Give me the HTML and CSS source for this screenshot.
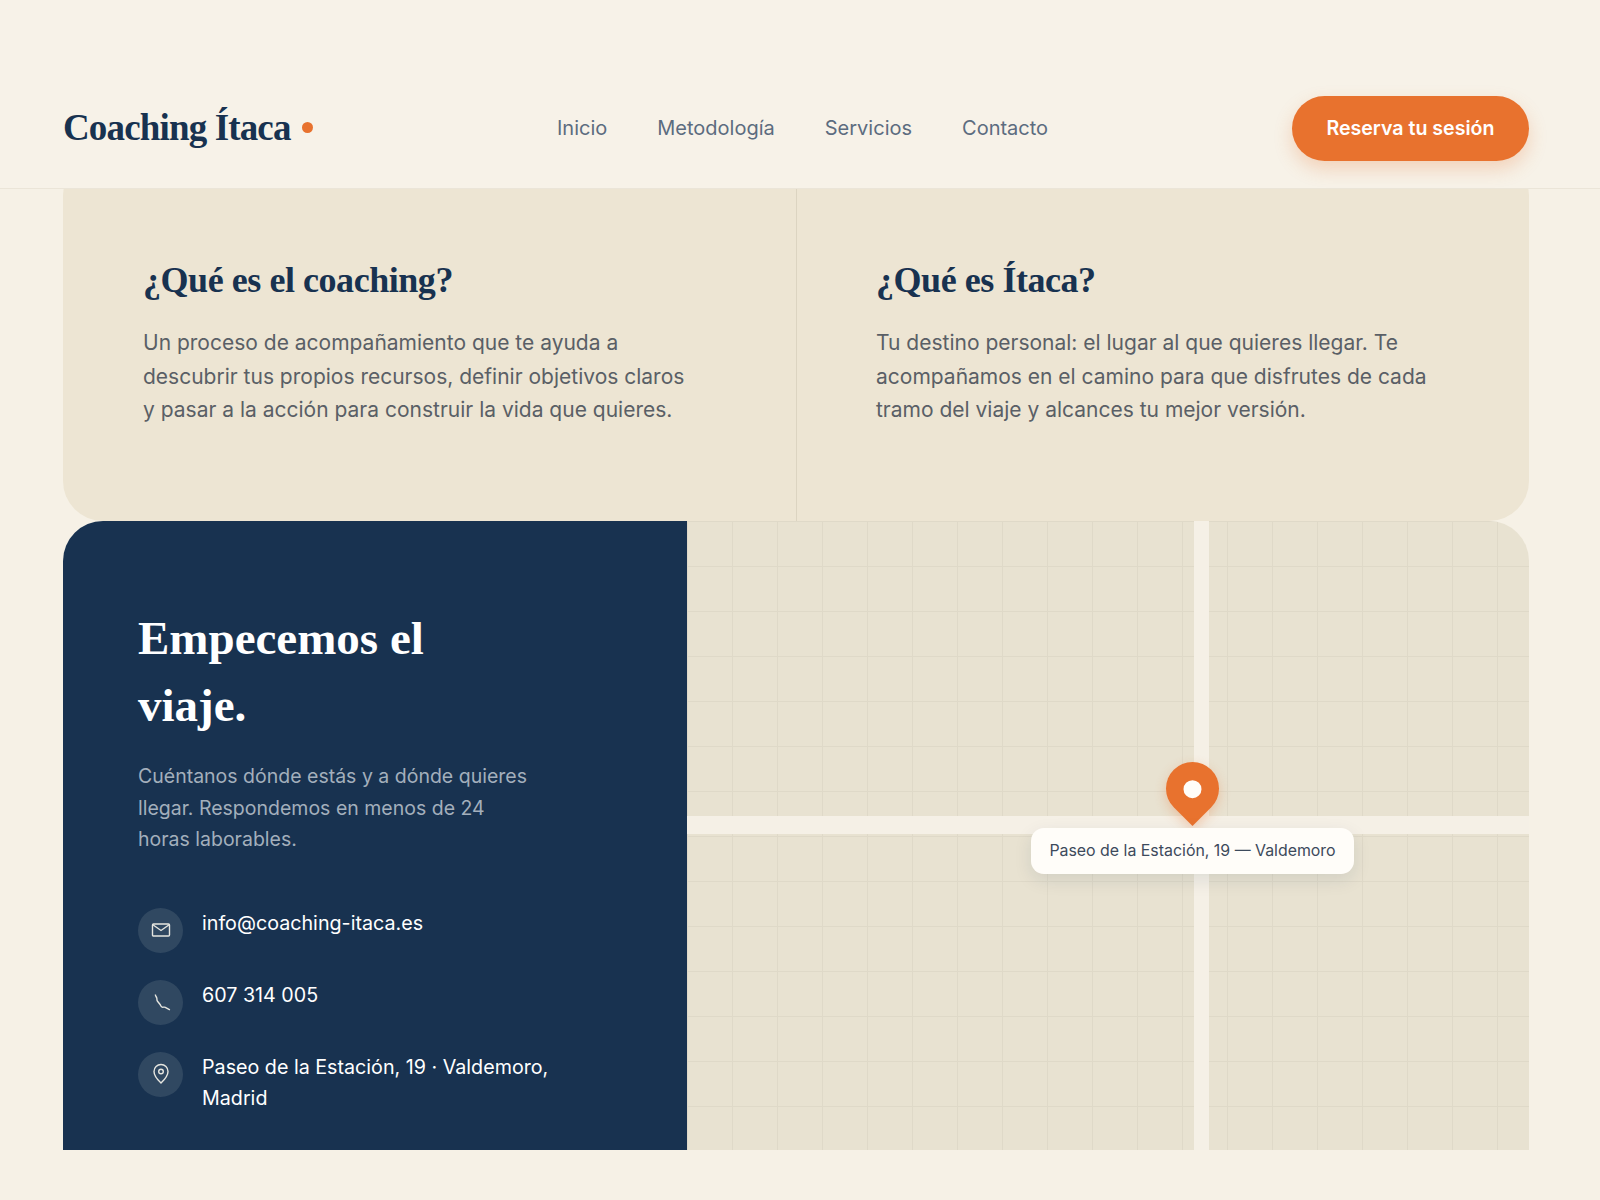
FILE: index.html
```html
<!DOCTYPE html>
<html lang="es">

<head>
    <meta charset="UTF-8">
    <meta name="viewport" content="width=device-width, initial-scale=1.0">
    <title>Coaching Ítaca</title>
    <link rel="stylesheet" href="styles.css">
</head>

<body>
    <header class="topbar">
        <a class="logo" href="#">Coaching Ítaca <span class="logo-dot"></span></a>
        <nav class="nav">
            <a href="#">Inicio</a>
            <a href="#">Metodología</a>
            <a href="#">Servicios</a>
            <a href="#">Contacto</a>
        </nav>
        <a class="btn-cta" href="#">Reserva tu sesión</a>
    </header>

    <main class="content">
        <section class="intro">
            <div class="intro-col">
                <h2>¿Qué es el coaching?</h2>
                <p>Un proceso de acompañamiento que te ayuda a descubrir tus propios recursos, definir objetivos claros y pasar a la acción para construir la vida que quieres.</p>
            </div>
            <div class="intro-col">
                <h2>¿Qué es Ítaca?</h2>
                <p>Tu destino personal: el lugar al que quieres llegar. Te acompañamos en el camino para que disfrutes de cada tramo del viaje y alcances tu mejor versión.</p>
            </div>
        </section>

        <section class="contact">
            <div class="contact-panel">
                <h2>Empecemos el viaje.</h2>
                <p class="contact-lead">Cuéntanos dónde estás y a dónde quieres llegar. Respondemos en menos de 24 horas laborables.</p>
                <ul class="contact-list">
                    <li>
                        <span class="contact-icon">
                            <svg viewBox="0 0 24 24"><rect x="3.5" y="6" width="17" height="12" rx="1"/><path d="M3.5 6.5l8.5 6 8.5-6"/></svg>
                        </span>
                        <span>info@coaching-itaca.es</span>
                    </li>
                    <li>
                        <span class="contact-icon">
                            <svg viewBox="0 0 24 24"><path d="M6.5 4.5c-.4 1.2.6 2 1.2 3.2.5 1.2-.2 2.4.8 3.6l2.6 3.2c.7 1 .7 2.2 2 2.6 1.2.3 2.200-.3 3.200.2l4.600 2.500"/></svg>
                        </span>
                        <span>607 314 005</span>
                    </li>
                    <li>
                        <span class="contact-icon">
                            <svg viewBox="0 0 24 24"><path d="M12 21s7-6.500 7-11.500a7 7 0 0 0-14 0c0 5 7 11.500 7 11.500z"/><circle cx="12" cy="9.500" r="2.300"/></svg>
                        </span>
                        <span>Paseo de la Estación, 19 · Valdemoro, Madrid</span>
                    </li>
                </ul>
            </div>
            <div class="map">
                <div class="road road-h"></div>
                <div class="road road-v"></div>
                <div class="pin"></div>
                <div class="pin-label">Paseo de la Estación, 19 — Valdemoro</div>
            </div>
        </section>
    </main>
</body>

</html>
```

FILE: styles.css
```css
* {
    box-sizing: border-box;
}

body {
    margin: 0;
    height: 1200px;
    overflow: hidden;
    background-color: #f6f1e6;
    font-family: 'Inter', 'Noto Sans', sans-serif;
}

a {
    text-decoration: none;
}

.topbar {
    position: relative;
    z-index: 2;
    display: flex;
    align-items: center;
    height: 189px;
    padding: 96px 71px 28px 63px;
    background-color: #f7f2e8;
    border-bottom: 1px solid #ebe5d8;
}

.logo {
    display: flex;
    align-items: center;
    width: 494px;
    padding-bottom: 2px;
    color: #183250;
    font-family: 'Liberation Serif', serif;
    font-size: 37px;
    font-weight: 700;
    letter-spacing: -0.85px;
}

.logo-dot {
    width: 11px;
    height: 11px;
    margin-left: 11px;
    border-radius: 50%;
    background-color: #e8722e;
}

.nav {
    display: flex;
    gap: 50px;
    flex: 1;
}

.nav a {
    color: #5c6c7f;
    font-size: 20px;
}

.btn-cta {
    padding: 21px 34.500px;
    border-radius: 33px;
    background-color: #e8722e;
    box-shadow: 0 8px 18px rgba(232, 114, 46, 0.25);
    color: #fff;
    font-size: 19.600px;
    font-weight: 600;
    line-height: 23px;
}

.content {
    padding: 0 71px 0 63px;
}

.intro {
    display: grid;
    grid-template-columns: 1fr 1fr;
    margin-top: -34px;
    background-color: #ede5d3;
    border-radius: 40px;
}

.intro-col {
    height: 366px;
    padding: 104px 80px 0;
}

.intro-col + .intro-col {
    padding-left: 79px;
    border-left: 1px solid #dcd4c1;
}

.intro h2 {
    margin: 0 0 25px;
    color: #183250;
    font-family: 'Liberation Serif', serif;
    font-size: 36px;
    font-weight: 700;
    letter-spacing: -0.45px;
    line-height: 42px;
}

.intro p {
    margin: 0;
    max-width: 555px;
    color: #5a5f66;
    font-size: 21px;
    line-height: 33.700px;
}

.contact {
    display: grid;
    grid-template-columns: 624px 1fr;
    height: 629px;
}

.contact-panel {
    padding: 84px 75px 0;
    background-color: #183250;
    border-top-left-radius: 40px;
    color: #fff;
}

.contact-panel h2 {
    margin: 0 0 22px;
    max-width: 380px;
    font-family: 'Liberation Serif', serif;
    font-size: 47px;
    font-weight: 700;
    line-height: 67px;
}

.contact-lead {
    margin: 0 0 52px;
    max-width: 400px;
    color: #a3afbc;
    font-size: 19.500px;
    line-height: 31.500px;
}

.contact-list {
    display: flex;
    flex-direction: column;
    gap: 27px;
    margin: 0;
    padding: 0;
    list-style: none;
}

.contact-list li {
    display: flex;
    gap: 19px;
    font-size: 19.700px;
    line-height: 31px;
}

.contact-icon {
    display: flex;
    flex: none;
    align-items: center;
    justify-content: center;
    width: 45px;
    height: 45px;
    border-radius: 50%;
    background-color: #304861;
}

.contact-icon svg {
    width: 24px;
    height: 24px;
    fill: none;
    stroke: #e6e6e0;
    stroke-width: 1.400;
}

.map {
    position: relative;
    overflow: hidden;
    border-top-right-radius: 40px;
    background-color: #e8e2d1;
    background-image:
        linear-gradient(to right, #dfd9c8 1px, transparent 1px),
        linear-gradient(to bottom, #dfd9c8 1px, transparent 1px);
    background-size: 45px 45px;
}

.road {
    position: absolute;
    background-color: #f5f0e6;
}

.road-h {
    left: 0;
    right: 0;
    top: 295px;
    height: 18px;
}

.road-v {
    top: 0;
    bottom: 0;
    left: 507px;
    width: 15px;
}

.pin {
    position: absolute;
    left: 479px;
    top: 241px;
    width: 53px;
    height: 53px;
    border-radius: 50% 50% 0 50%;
    background-color: #e8722e;
    box-shadow: 3px 3px 12px rgba(232, 114, 46, 0.3);
    transform: rotate(45deg);
}

.pin::after {
    content: "";
    position: absolute;
    left: 17.500px;
    top: 17.500px;
    width: 18px;
    height: 18px;
    border-radius: 50%;
    background-color: #fffdf9;
}

.pin-label {
    position: absolute;
    left: 344px;
    top: 307px;
    width: 323px;
    height: 46px;
    border-radius: 13px;
    background-color: #fffdf9;
    box-shadow: 0 6px 18px rgba(24, 50, 80, 0.1);
    color: #3d4a5c;
    font-size: 15.900px;
    line-height: 46px;
    text-align: center;
}
```
